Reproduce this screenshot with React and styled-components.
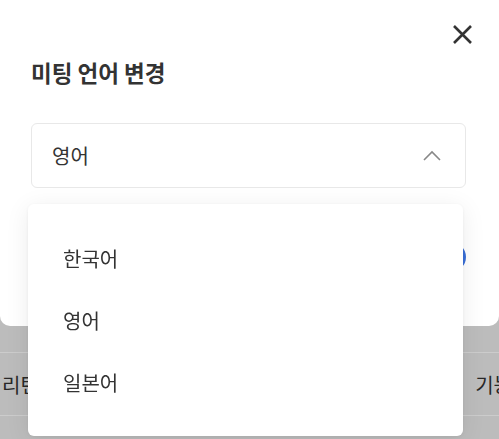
import React from "react";
import styled, { createGlobalStyle } from "styled-components";

const Global = createGlobalStyle`
  * { box-sizing: border-box; }
  html, body { margin: 0; padding: 0; }
  body {
    font-family: "Noto Sans CJK KR", "Noto Sans", sans-serif;
    color: #333;
    background: #ececec;
    overflow: hidden;
  }
`;

const Page = styled.div`
  width: 499px;
  height: 439px;
  padding-top: 352px;
  background: #ececec;
`;

const Row = styled.div`
  height: 64px;
  border-top: 1px solid #ffffff;
  border-bottom: 1px solid #ffffff;
  display: flex;
  align-items: center;
  justify-content: space-between;
  padding: 0 0 0 2px;
  font-size: 20px;
  color: #333;
  overflow: hidden;
`;

const Cell = styled.span`
  white-space: nowrap;
  margin-right: ${(p) => (p.$edge ? "-13px" : "0")};
`;

const Overlay = styled.div`
  position: fixed;
  inset: 0;
  background: rgba(0, 0, 0, 0.2);
`;

const Modal = styled.div`
  position: fixed;
  left: 0;
  top: -20px;
  width: 499px;
  background: #fff;
  border-radius: 10px;
  padding: 77px 33px 54px 31px;
  display: flex;
  flex-direction: column;
`;

const CloseButton = styled.button`
  position: absolute;
  top: 44px;
  right: 26px;
  width: 21px;
  height: 21px;
  padding: 0;
  border: none;
  background: none;
  display: flex;
  cursor: pointer;
`;

const Title = styled.h2`
  margin: 0;
  font-size: 22.5px;
  line-height: 30px;
  font-weight: 700;
  color: #333;
`;

const SelectWrap = styled.div`
  position: relative;
  margin-top: 36px;
`;

const SelectBox = styled.div`
  height: 65px;
  border: 1px solid #e8e8e8;
  border-radius: 6px;
  display: flex;
  align-items: center;
  justify-content: space-between;
  padding: 0 24px 0 20px;
  font-size: 20px;
  color: #333;
`;

const Menu = styled.ul`
  position: absolute;
  top: 81px;
  left: -3px;
  width: 435px;
  margin: 0;
  padding: 23px 0 23px;
  list-style: none;
  background: #fff;
  border-radius: 6px;
  box-shadow: 0 4px 24px rgba(0, 0, 0, 0.08), 0 1px 4px rgba(0, 0, 0, 0.06);
  z-index: 2;
`;

const MenuItem = styled.li`
  height: 62px;
  display: flex;
  align-items: center;
  padding-left: 35px;
  font-size: 20px;
  color: #333;
`;

const Footer = styled.div`
  margin-top: 54px;
  display: flex;
  justify-content: flex-end;
`;

const PrimaryButton = styled.button`
  height: 30px;
  width: 90px;
  border: none;
  border-radius: 15px;
  background: #3a6fd8;
  color: #fff;
  font-family: inherit;
  font-size: 14px;
`;

export default function App() {
  return (
    <>
      <Global />
      <Page>
        <Row>
          <Cell>리턴</Cell>
          <Cell $edge>기능</Cell>
        </Row>
      </Page>
      <Overlay />
      <Modal>
        <CloseButton aria-label="닫기">
          <svg width="21" height="21" viewBox="0 0 21 21">
            <path d="M2 2 L19 19 M19 2 L2 19" stroke="#333" strokeWidth="2.6" strokeLinecap="butt" />
          </svg>
        </CloseButton>
        <Title>미팅 언어 변경</Title>
        <SelectWrap>
          <SelectBox>
            <span>영어</span>
            <svg width="18" height="11" viewBox="0 0 18 11">
              <path d="M1 10 L9 2 L17 10" fill="none" stroke="#888" strokeWidth="1.6" />
            </svg>
          </SelectBox>
          <Menu>
            <MenuItem>한국어</MenuItem>
            <MenuItem>영어</MenuItem>
            <MenuItem>일본어</MenuItem>
          </Menu>
        </SelectWrap>
        <Footer>
          <PrimaryButton>변경</PrimaryButton>
        </Footer>
      </Modal>
    </>
  );
}
